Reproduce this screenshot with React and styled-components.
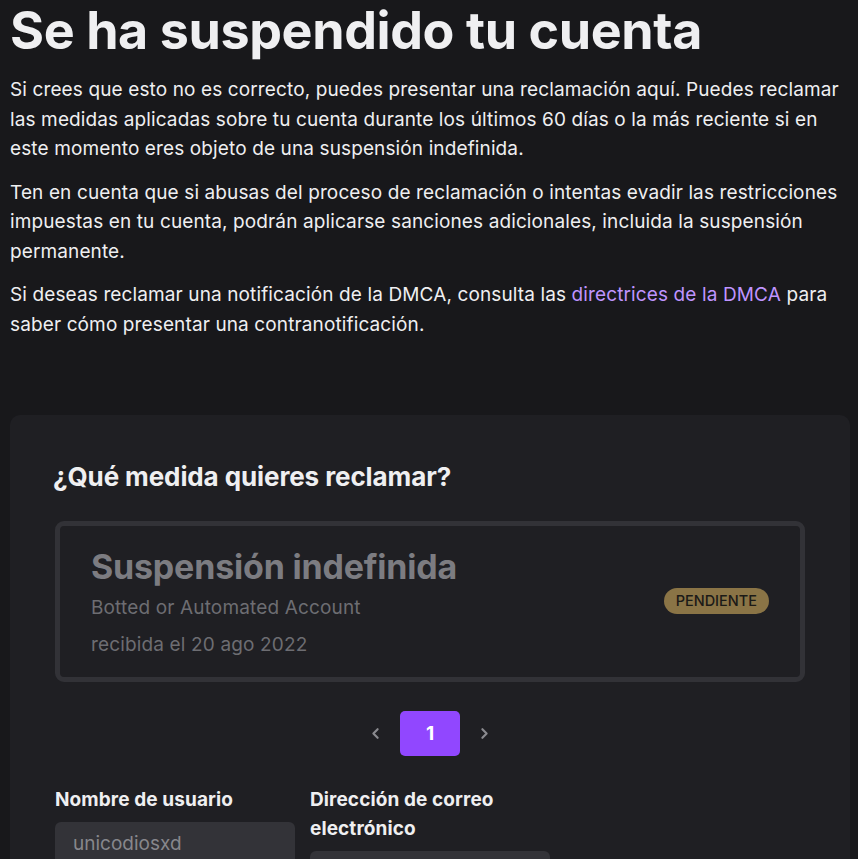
import styled, { createGlobalStyle } from "styled-components";
import { ChevronLeft, ChevronRight } from "lucide-react";

const GlobalStyle = createGlobalStyle`
  html, body {
    margin: 0;
    padding: 0;
    background: #18181b;
  }
  body {
    font-family: Inter, "Noto Sans", "Liberation Sans", sans-serif;
    color: #efeff1;
    overflow: hidden;
  }
`;

const Page = styled.div`
  padding: 0 8px 0 10px;
`;

const Title = styled.h1`
  margin: 0 0 14px;
  padding-top: 1px;
  font-size: 52px;
  line-height: 60px;
  font-weight: 700;
  letter-spacing: -0.4px;
  color: #efeff1;
`;

const Paragraph = styled.p`
  margin: 8px 0 14px;
  font-size: 19px;
  line-height: 29.5px;
  letter-spacing: 0.12px;
  color: #efeff1;
`;

const Link = styled.a`
  color: #bf94ff;
  text-decoration: none;
`;

const Card = styled.section`
  margin-top: 76px;
  background: #1f1f23;
  border-radius: 10px;
  padding: 46px 45px 40px;
`;

const CardTitle = styled.h2`
  margin: 0 0 28px -2px;
  font-size: 26px;
  line-height: 32px;
  font-weight: 700;
  letter-spacing: -0.1px;
`;

const Claim = styled.div`
  display: flex;
  align-items: center;
  justify-content: space-between;
  border: 5px solid #323237;
  border-radius: 9px;
  padding: 19px 31px 14px;
`;

const ClaimInfo = styled.div`
  display: flex;
  flex-direction: column;
`;

const ClaimTitle = styled.div`
  font-size: 34px;
  line-height: 44px;
  font-weight: 700;
  letter-spacing: -0.2px;
  color: #7c7c81;
`;

const ClaimMeta = styled.div`
  font-size: 19px;
  line-height: 37px;
  letter-spacing: 0.15px;
  color: #6d6d72;
`;

const Badge = styled.span`
  background: #8a7446;
  color: #1b1a17;
  font-size: 14.5px;
  font-weight: 500;
  line-height: 26px;
  padding: 0 12px;
  border-radius: 13px;
  margin-top: -6px;
`;

const Pager = styled.div`
  display: flex;
  justify-content: center;
  align-items: center;
  gap: 16px;
  margin: 29px 0 29px;
`;

const Arrow = styled.span`
  display: flex;
  color: #8a8a8f;
`;

const PageButton = styled.div`
  width: 60px;
  height: 45px;
  border-radius: 5px;
  background: #9147ff;
  color: #fff;
  font-size: 19px;
  font-weight: 700;
  display: flex;
  align-items: center;
  justify-content: center;
`;

const FormRow = styled.div`
  display: grid;
  grid-template-columns: 240px 240px;
  gap: 15px;
  align-items: start;
`;

const Field = styled.div`
  display: flex;
  flex-direction: column;
  gap: 8px;
`;

const Label = styled.label`
  font-size: 19px;
  line-height: 29px;
  font-weight: 700;
  letter-spacing: 0.1px;
`;

const Input = styled.div`
  height: 44px;
  border-radius: 6px;
  background: #333338;
  color: #87878c;
  font-size: 19px;
  line-height: 44px;
  padding: 0 18px;
`;

export default function App() {
  return (
    <Page>
      <GlobalStyle />
      <Title>Se ha suspendido tu cuenta</Title>
      <Paragraph>
        Si crees que esto no es correcto, puedes presentar una reclamación aquí. Puedes reclamar las
        medidas aplicadas sobre tu cuenta durante los últimos 60 días o la más reciente si en este
        momento eres objeto de una suspensión indefinida.
      </Paragraph>
      <Paragraph>
        Ten en cuenta que si abusas del proceso de reclamación o intentas evadir las restricciones
        impuestas en tu cuenta, podrán aplicarse sanciones adicionales, incluida la suspensión
        permanente.
      </Paragraph>
      <Paragraph>
        Si deseas reclamar una notificación de la DMCA, consulta las{" "}
        <Link href="#">directrices de la DMCA</Link> para saber cómo presentar una
        contranotificación.
      </Paragraph>
      <Card>
        <CardTitle>¿Qué medida quieres reclamar?</CardTitle>
        <Claim>
          <ClaimInfo>
            <ClaimTitle>Suspensión indefinida</ClaimTitle>
            <ClaimMeta>Botted or Automated Account</ClaimMeta>
            <ClaimMeta>recibida el 20 ago 2022</ClaimMeta>
          </ClaimInfo>
          <Badge>PENDIENTE</Badge>
        </Claim>
        <Pager>
          <Arrow>
            <ChevronLeft size={17} strokeWidth={3} />
          </Arrow>
          <PageButton>1</PageButton>
          <Arrow>
            <ChevronRight size={17} strokeWidth={3} />
          </Arrow>
        </Pager>
        <FormRow>
          <Field>
            <Label>Nombre de usuario</Label>
            <Input>unicodiosxd</Input>
          </Field>
          <Field>
            <Label>Dirección de correo electrónico</Label>
            <Input />
          </Field>
        </FormRow>
      </Card>
    </Page>
  );
}
